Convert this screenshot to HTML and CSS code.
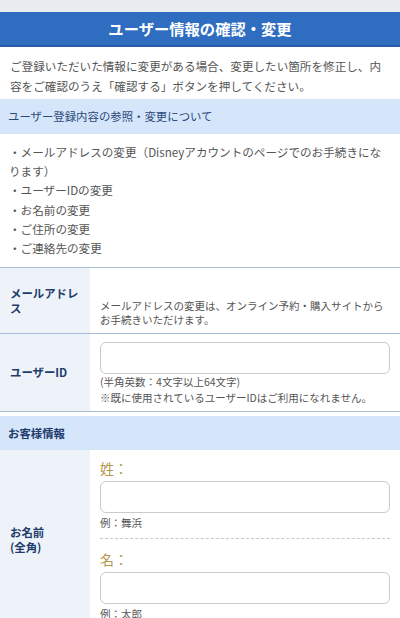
FILE: index.html
```html
<!DOCTYPE html>
<html lang="ja">

<head>
    <meta charset="UTF-8">
    <meta name="viewport" content="width=device-width, initial-scale=1.0">
    <title>ユーザー情報の確認・変更</title>
    <link rel="stylesheet" href="styles.css">
</head>

<body>
    <div class="top-strip"></div>
    <h1 class="page-title">ユーザー情報の確認・変更</h1>

    <p class="intro">ご登録いただいた情報に変更がある場合、変更したい箇所を修正し、内容をご確認のうえ「確認する」ボタンを押してください。</p>

    <div class="section-bar">ユーザー登録内容の参照・変更について</div>
    <ul class="change-list">
        <li>・メールアドレスの変更（Disneyアカウントのページでのお手続きになります）</li>
        <li>・ユーザーIDの変更</li>
        <li>・お名前の変更</li>
        <li>・ご住所の変更</li>
        <li>・ご連絡先の変更</li>
    </ul>

    <div class="form-table">
        <div class="form-row">
            <div class="form-label">メールアドレス</div>
            <div class="form-field mail-field">
                <p class="note">メールアドレスの変更は、オンライン予約・購入サイトからお手続きいただけます。</p>
            </div>
        </div>
        <div class="form-row">
            <div class="form-label">ユーザーID</div>
            <div class="form-field">
                <input type="text" class="text-input">
                <p class="note tall">(半角英数：4文字以上64文字)<br>※既に使用されているユーザーIDはご利用になれません。</p>
            </div>
        </div>
    </div>

    <div class="section-bar bold">お客様情報</div>
    <div class="form-table no-top">
        <div class="form-row">
            <div class="form-label">お名前<br>(全角)</div>
            <div class="form-field name-field">
                <div class="sub-label">姓：</div>
                <input type="text" class="text-input">
                <p class="example">例：舞浜</p>
                <hr class="dashed">
                <div class="sub-label">名：</div>
                <input type="text" class="text-input">
                <p class="example">例：太郎</p>
            </div>
        </div>
    </div>
</body>

</html>
```

FILE: styles.css
```css
body {
    margin: 0;
    background-color: #fff;
    font-family: "Noto Sans CJK JP", "Noto Sans", sans-serif;
    color: #555;
}

.top-strip {
    height: 12px;
    background-color: #e9edf2;
}

.page-title {
    margin: 0;
    height: 33px;
    line-height: 33px;
    background-color: #2f6dc0;
    border-bottom: 2px solid #285ca6;
    color: #fff;
    font-size: 15.3px;
    font-weight: bold;
    text-align: center;
}

.intro {
    margin: 0;
    padding: 9px 10px 3px;
    font-size: 11.6px;
    line-height: 20px;
}

.section-bar {
    height: 35px;
    line-height: 35px;
    padding-left: 8px;
    background-color: #d5e6fb;
    color: #2c4a7a;
    font-size: 11.4px;
}

.section-bar.bold {
    height: 34px;
    line-height: 34px;
    margin-top: 4px;
    font-weight: bold;
    color: #1f3c6c;
}

.change-list {
    list-style-type: none;
    margin: 0;
    padding: 9px 10px 9px 9px;
    font-size: 11.6px;
    line-height: 19.2px;
}

.form-table {
    border-top: 1px solid #a9bdd6;
}

.form-table.no-top {
    border-top: none;
}

.form-row {
    display: flex;
    border-bottom: 1px solid #a9bdd6;
}

.form-table.no-top .form-row {
    border-bottom: none;
}

.form-label {
    width: 70px;
    flex-shrink: 0;
    padding: 0 10px;
    display: flex;
    align-items: center;
    background-color: #eef3fa;
    color: #1f3c6c;
    font-size: 11.4px;
    font-weight: bold;
    line-height: 15px;
}

.form-field {
    flex: 1;
    padding: 8px 10px 5px;
}

.mail-field {
    padding-top: 31px;
    padding-bottom: 6px;
}

.note {
    margin: 0;
    font-size: 10.5px;
    line-height: 14px;
}

.note.tall {
    line-height: 16px;
}

.text-input {
    display: block;
    box-sizing: border-box;
    width: 100%;
    height: 32px;
    margin: 0;
    border: 1px solid #cbcbcb;
    border-radius: 6px;
    background-color: #fff;
}

.name-field {
    padding-bottom: 8px;
}

.sub-label {
    font-size: 14px;
    line-height: 20px;
    color: #b5964f;
    margin-bottom: 3px;
}

.example {
    margin: 2px 0 0;
    font-size: 10.5px;
    line-height: 16px;
}

.dashed {
    margin: 7px 0 10px;
    border: none;
    border-top: 1px dashed #c8c8c8;
}
```
